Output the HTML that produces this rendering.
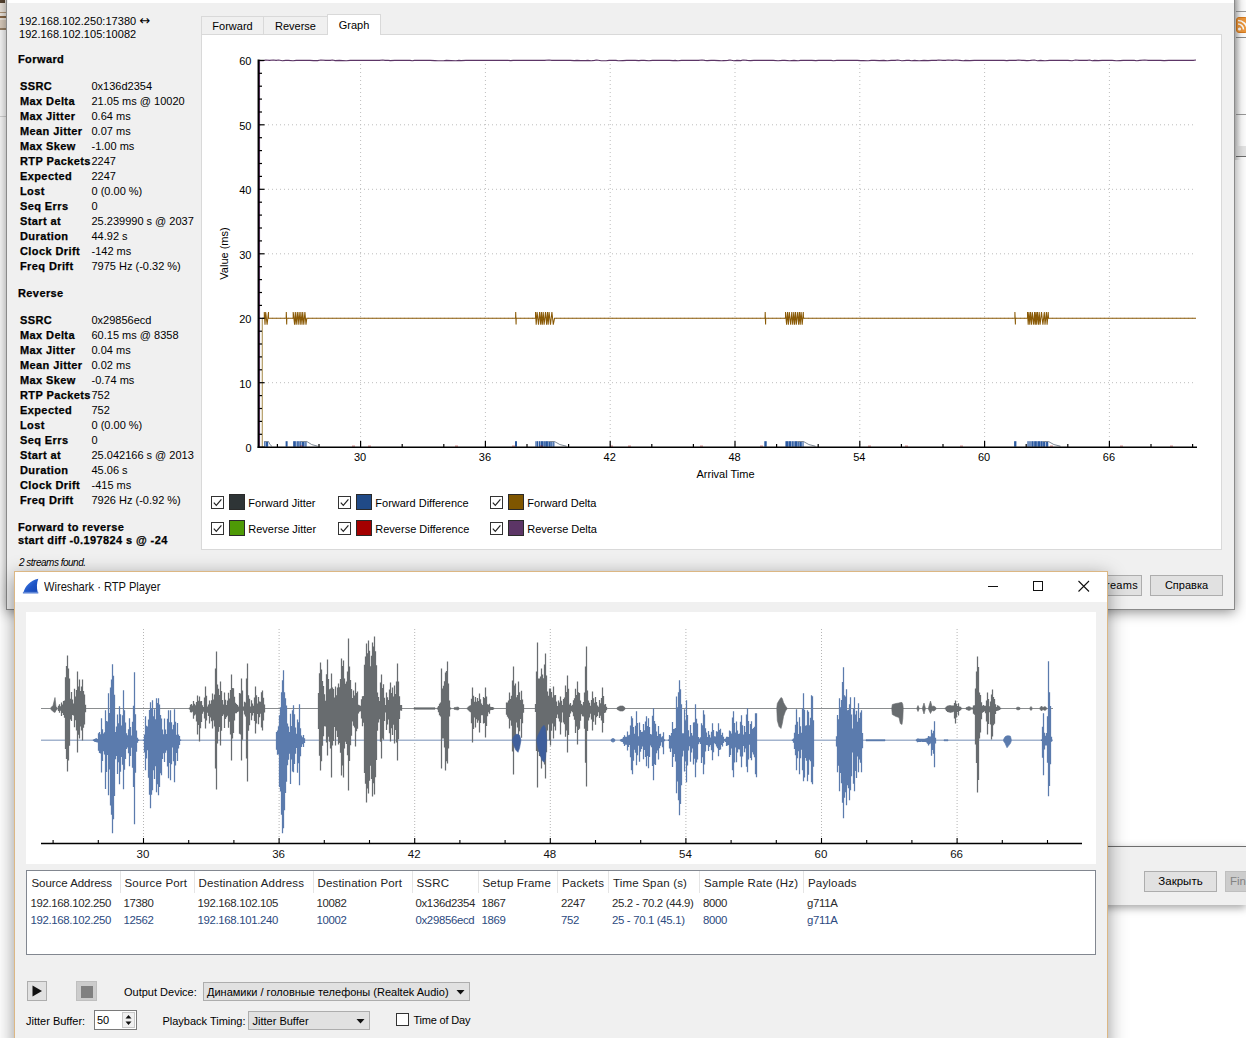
<!DOCTYPE html><html><head><meta charset="utf-8"><title>Wireshark RTP</title><style>
*{margin:0;padding:0;box-sizing:border-box}
html,body{width:1246px;height:1038px;overflow:hidden;background:#fff}
body{position:relative;font-family:"Liberation Sans",sans-serif;font-size:11px;color:#000;line-height:13px}
.a{position:absolute;white-space:nowrap}
.b{font-weight:bold;letter-spacing:.4px;-webkit-text-stroke:.25px #000}
.t{position:absolute;white-space:nowrap;height:13px;line-height:13px}
.btn{position:absolute;background:#e1e1e1;border:1px solid #adadad;text-align:center;white-space:nowrap}
.s{font-size:11.4px;color:#2b2b2b;letter-spacing:-.33px}
.s2{font-size:11.4px;color:#2c4a80;letter-spacing:-.33px}
.hd{font-size:11.5px;color:#222;letter-spacing:.18px}
</style></head><body>
<div class="a" style="left:0;top:0;width:7px;height:30px;background:#f3ece4"></div>
<div class="a" style="left:0;top:0;width:5px;height:3px;background:#5a4632"></div>
<div class="a" style="left:0;top:12px;width:7px;height:1px;background:#b59a7c"></div>
<div class="a" style="left:0;top:16px;width:7px;height:2px;background:#8b6a48"></div>
<div class="a" style="left:0;top:20px;width:7px;height:8px;background:#e0d2c2"></div>
<div class="a" style="left:0;top:28px;width:7px;height:2px;background:#9c8468"></div>
<div class="a" style="left:0;top:116px;width:7px;height:1px;background:#d8d8d8"></div>
<div class="a" style="left:1235px;top:0;width:11px;height:160px;background:linear-gradient(90deg,#d8d8d8,#fff 6px)"></div>
<div class="a" style="left:1236px;top:11px;width:10px;height:1px;background:#9a9a9a"></div>
<div class="a" style="left:1236px;top:17px;width:12px;height:16px;background:#f09a3e;border:1px solid #d97c1e;border-radius:3px;overflow:hidden"><svg width="10" height="14" viewBox="0 0 10 14" style="position:absolute;left:0;top:0"><circle cx="2.5" cy="11" r="1.6" fill="#fff"/><path d="M1,6 a5.5,5.5 0 0 1 5.5,5.5" stroke="#fff" stroke-width="1.6" fill="none"/><path d="M1,2.5 a9,9 0 0 1 9,9" stroke="#fff" stroke-width="1.6" fill="none"/></svg></div>
<div class="a" style="left:1236px;top:37px;width:10px;height:1px;background:#8c8c8c"></div>
<div class="a" style="left:1236px;top:114px;width:10px;height:1px;background:#9a9a9a"></div>
<div class="a" style="left:1236px;top:146px;width:10px;height:10px;background:#e6e6e6"></div>
<div class="a" style="left:1236px;top:156px;width:10px;height:1px;background:#6e6e6e"></div>
<div class="a" style="left:1100px;top:846px;width:146px;height:59px;background:#f0f0f0;border-top:1px solid #6e6e6e;box-shadow:0 3px 8px rgba(0,0,0,.35)"></div>
<div class="btn" style="left:1144px;top:871px;width:73px;height:21px;line-height:19px;font-size:11.5px">Закрыть</div>
<div class="btn" style="left:1225px;top:871px;width:40px;height:21px;line-height:19px;background:#ccc;border-color:#bfbfbf;color:#838383;text-align:left;padding-left:4px;font-size:11.5px">Find</div>
<div class="a" style="left:6px;top:-10px;width:1229px;height:619.5px;background:#f0f0f0;border:1px solid #8a8a8a;border-top:none;box-shadow:0 2px 12px rgba(0,0,0,.45)"></div>
<div class="a" style="left:8px;top:0;width:1226px;height:3px;background:#fff"></div>
<div class="t " style="left:19px;top:15.2px;letter-spacing:.05px">192.168.102.250:17380 <span style="font-family:DejaVu Sans;font-size:13px;line-height:10px">&#8596;</span></div>
<div class="t " style="left:19px;top:28px;letter-spacing:.05px">192.168.102.105:10082</div>
<div class="t b" style="left:18px;top:53.3px;">Forward</div>
<div class="t b" style="left:20px;top:80px;">SSRC</div>
<div class="t " style="left:91.5px;top:80px;">0x136d2354</div>
<div class="t b" style="left:20px;top:95px;">Max Delta</div>
<div class="t " style="left:91.5px;top:95px;">21.05 ms @ 10020</div>
<div class="t b" style="left:20px;top:110px;">Max Jitter</div>
<div class="t " style="left:91.5px;top:110px;">0.64 ms</div>
<div class="t b" style="left:20px;top:125px;">Mean Jitter</div>
<div class="t " style="left:91.5px;top:125px;">0.07 ms</div>
<div class="t b" style="left:20px;top:140px;">Max Skew</div>
<div class="t " style="left:91.5px;top:140px;">-1.00 ms</div>
<div class="t b" style="left:20px;top:155px;">RTP Packets</div>
<div class="t " style="left:91.5px;top:155px;">2247</div>
<div class="t b" style="left:20px;top:170px;">Expected</div>
<div class="t " style="left:91.5px;top:170px;">2247</div>
<div class="t b" style="left:20px;top:185px;">Lost</div>
<div class="t " style="left:91.5px;top:185px;">0 (0.00 %)</div>
<div class="t b" style="left:20px;top:200px;">Seq Errs</div>
<div class="t " style="left:91.5px;top:200px;">0</div>
<div class="t b" style="left:20px;top:215px;">Start at</div>
<div class="t " style="left:91.5px;top:215px;">25.239990 s @ 2037</div>
<div class="t b" style="left:20px;top:230px;">Duration</div>
<div class="t " style="left:91.5px;top:230px;">44.92 s</div>
<div class="t b" style="left:20px;top:245px;">Clock Drift</div>
<div class="t " style="left:91.5px;top:245px;">-142 ms</div>
<div class="t b" style="left:20px;top:260px;">Freq Drift</div>
<div class="t " style="left:91.5px;top:260px;">7975 Hz (-0.32 %)</div>
<div class="t b" style="left:18px;top:287px;">Reverse</div>
<div class="t b" style="left:20px;top:314px;">SSRC</div>
<div class="t " style="left:91.5px;top:314px;">0x29856ecd</div>
<div class="t b" style="left:20px;top:329px;">Max Delta</div>
<div class="t " style="left:91.5px;top:329px;">60.15 ms @ 8358</div>
<div class="t b" style="left:20px;top:344px;">Max Jitter</div>
<div class="t " style="left:91.5px;top:344px;">0.04 ms</div>
<div class="t b" style="left:20px;top:359px;">Mean Jitter</div>
<div class="t " style="left:91.5px;top:359px;">0.02 ms</div>
<div class="t b" style="left:20px;top:374px;">Max Skew</div>
<div class="t " style="left:91.5px;top:374px;">-0.74 ms</div>
<div class="t b" style="left:20px;top:389px;">RTP Packets</div>
<div class="t " style="left:91.5px;top:389px;">752</div>
<div class="t b" style="left:20px;top:404px;">Expected</div>
<div class="t " style="left:91.5px;top:404px;">752</div>
<div class="t b" style="left:20px;top:419px;">Lost</div>
<div class="t " style="left:91.5px;top:419px;">0 (0.00 %)</div>
<div class="t b" style="left:20px;top:434px;">Seq Errs</div>
<div class="t " style="left:91.5px;top:434px;">0</div>
<div class="t b" style="left:20px;top:449px;">Start at</div>
<div class="t " style="left:91.5px;top:449px;">25.042166 s @ 2013</div>
<div class="t b" style="left:20px;top:464px;">Duration</div>
<div class="t " style="left:91.5px;top:464px;">45.06 s</div>
<div class="t b" style="left:20px;top:479px;">Clock Drift</div>
<div class="t " style="left:91.5px;top:479px;">-415 ms</div>
<div class="t b" style="left:20px;top:494px;">Freq Drift</div>
<div class="t " style="left:91.5px;top:494px;">7926 Hz (-0.92 %)</div>
<div class="t b" style="left:18px;top:521px;">Forward to reverse</div>
<div class="t b" style="left:18px;top:534.2px;">start diff -0.197824 s @ -24</div>
<div class="t " style="left:19px;top:556.4px;font-size:10px;letter-spacing:-.5px"><i>2 streams found.</i></div>
<div class="a" style="left:201px;top:34px;width:1021px;height:516px;background:#fff;border:1px solid #d9d9d9"></div>
<div class="a" style="left:201px;top:16px;width:63px;height:19px;background:#f0f0f0;border:1px solid #d9d9d9;text-align:center;line-height:19px">Forward</div>
<div class="a" style="left:263px;top:16px;width:65px;height:19px;background:#f0f0f0;border:1px solid #d9d9d9;text-align:center;line-height:19px">Reverse</div>
<div class="a" style="left:327px;top:14px;width:54px;height:21px;background:#fff;border:1px solid #d9d9d9;border-bottom:none;text-align:center;line-height:21px">Graph</div>
<svg class="a" style="left:0;top:0" width="1246" height="560" viewBox="0 0 1246 560" font-family="Liberation Sans, sans-serif" font-size="11px">
<line x1="360.6" x2="360.6" y1="60" y2="447" stroke="#bdbdbd" stroke-width="1" stroke-dasharray="1,3"/>
<line x1="485.4" x2="485.4" y1="60" y2="447" stroke="#bdbdbd" stroke-width="1" stroke-dasharray="1,3"/>
<line x1="610.2" x2="610.2" y1="60" y2="447" stroke="#bdbdbd" stroke-width="1" stroke-dasharray="1,3"/>
<line x1="735.0" x2="735.0" y1="60" y2="447" stroke="#bdbdbd" stroke-width="1" stroke-dasharray="1,3"/>
<line x1="859.8" x2="859.8" y1="60" y2="447" stroke="#bdbdbd" stroke-width="1" stroke-dasharray="1,3"/>
<line x1="984.6" x2="984.6" y1="60" y2="447" stroke="#bdbdbd" stroke-width="1" stroke-dasharray="1,3"/>
<line x1="1109.4" x2="1109.4" y1="60" y2="447" stroke="#bdbdbd" stroke-width="1" stroke-dasharray="1,3"/>
<line x1="260" x2="1196" y1="382.7" y2="382.7" stroke="#bdbdbd" stroke-width="1" stroke-dasharray="1,3"/>
<line x1="260" x2="1196" y1="318.3" y2="318.3" stroke="#bdbdbd" stroke-width="1" stroke-dasharray="1,3"/>
<line x1="260" x2="1196" y1="253.8" y2="253.8" stroke="#bdbdbd" stroke-width="1" stroke-dasharray="1,3"/>
<line x1="260" x2="1196" y1="189.3" y2="189.3" stroke="#bdbdbd" stroke-width="1" stroke-dasharray="1,3"/>
<line x1="260" x2="1196" y1="124.8" y2="124.8" stroke="#bdbdbd" stroke-width="1" stroke-dasharray="1,3"/>
<path d="M259.5,447 L259.5,60.4L263.2,60.8L265.6,60.0L269.5,60.4L273.3,60.0L276.1,60.4L278.7,60.0L282.3,60.8L285.7,60.4L288.4,60.4L293.0,60.8L296.2,60.4L300.2,60.4L302.7,60.4L305.6,60.4L310.0,60.4L313.5,60.6L317.6,60.6L320.8,60.0L325.7,60.4L330.3,60.4L332.4,60.0L335.1,60.6L339.4,60.4L342.7,60.6L346.4,60.8L350.2,60.4L354.9,60.4L359.4,60.4L363.5,60.4L368.4,60.4L372.6,60.4L376.5,60.4L379.3,60.4L382.8,60.0L385.0,60.4L388.3,60.4L390.3,60.6L394.6,60.4L396.8,60.4L399.9,60.4L403.5,60.4L407.1,60.4L410.0,60.4L412.3,60.8L414.4,60.4L419.3,60.4L423.2,60.4L427.2,60.4L430.2,60.4L434.9,60.6L438.0,60.8L441.1,60.8L443.5,60.8L446.3,60.4L451.1,60.6L456.0,60.8L458.9,60.4L461.0,60.6L465.9,60.4L468.0,60.4L470.2,60.4L473.6,60.4L477.4,60.4L481.6,60.4L485.4,60.4L490.3,60.4L494.1,60.4L497.9,60.4L500.4,60.4L503.4,60.4L507.9,60.4L510.8,60.6L513.1,60.4L518.0,60.4L521.0,60.4L524.9,60.4L527.7,60.4L531.7,60.4L534.0,60.4L538.8,60.4L542.2,60.4L544.4,60.4L549.1,60.0L551.9,60.4L554.0,60.4L556.9,60.4L561.5,60.4L565.9,60.4L570.3,60.4L574.1,60.6L577.0,60.4L580.4,60.6L583.3,60.6L585.4,60.6L587.8,60.4L591.3,60.8L594.6,60.4L596.7,60.0L601.2,60.8L606.1,60.8L609.1,60.4L613.7,60.4L616.0,60.4L618.2,60.8L622.9,60.6L626.7,60.4L630.1,60.4L632.6,60.4L635.3,60.4L638.9,60.6L641.1,60.4L644.1,60.4L649.0,60.8L652.4,60.4L655.5,60.4L657.9,60.4L660.4,60.4L665.1,60.4L669.6,60.4L673.1,60.6L675.2,60.4L678.0,60.8L681.5,60.4L685.0,60.4L689.5,60.4L691.7,60.4L693.9,60.4L698.4,60.4L702.0,60.0L704.9,60.4L707.1,60.6L711.1,60.4L714.2,60.4L719.1,60.6L721.5,60.8L723.5,60.6L727.9,60.4L730.0,60.0L733.8,60.8L737.0,60.4L740.8,60.6L743.0,60.0L747.3,60.4L750.5,60.6L753.9,60.4L756.6,60.4L760.7,60.4L765.1,60.4L768.4,60.4L773.2,60.4L778.1,60.8L782.4,60.4L784.8,60.4L789.6,60.8L794.0,60.4L798.2,60.8L800.5,60.4L803.9,60.4L808.3,60.4L811.8,60.4L815.8,60.6L818.4,60.4L821.4,60.4L823.5,60.4L827.5,60.4L831.2,60.4L833.3,60.8L836.9,60.4L839.2,60.4L844.0,60.4L847.7,60.4L852.2,60.4L857.2,60.4L860.5,60.6L863.3,60.6L868.1,60.8L871.4,60.4L874.5,60.4L879.4,60.6L883.9,60.4L887.2,60.8L891.2,60.4L895.2,60.4L897.7,60.0L901.9,60.8L906.7,60.4L909.2,60.4L911.6,60.8L914.5,60.4L919.1,60.8L924.0,60.4L928.0,60.6L931.8,60.4L936.4,60.4L938.5,60.0L942.9,60.4L945.4,60.4L948.1,60.0L952.5,60.4L955.7,60.0L959.8,60.4L963.2,60.8L965.3,60.4L969.9,60.6L974.2,60.4L977.6,60.4L982.3,60.4L987.2,60.4L989.9,60.4L994.2,60.4L996.8,60.4L1001.5,60.4L1004.0,60.4L1006.9,60.6L1009.2,60.4L1011.6,60.4L1016.1,60.4L1018.2,60.0L1021.9,60.4L1023.9,60.4L1026.9,60.6L1030.4,60.4L1034.3,60.0L1037.5,60.8L1040.5,60.4L1042.7,60.6L1045.0,60.8L1049.7,60.4L1053.3,60.4L1057.4,60.4L1061.6,60.4L1065.6,60.4L1067.9,60.4L1072.0,60.8L1075.5,60.0L1079.1,60.4L1083.2,60.4L1087.2,60.4L1089.7,60.0L1092.1,60.8L1094.5,60.4L1098.4,60.6L1102.1,60.4L1105.5,60.4L1109.8,60.4L1112.1,60.4L1116.4,60.8L1120.1,60.6L1123.2,60.4L1126.0,60.4L1130.6,60.4L1134.1,60.4L1136.8,60.8L1139.9,60.4L1144.7,60.0L1148.3,60.4L1151.4,60.4L1153.8,60.4L1157.9,60.4L1160.4,60.4L1164.1,60.6L1168.6,60.4L1172.4,60.4L1176.9,60.4L1180.6,60.4L1184.3,60.4L1188.9,60.4L1193.2,60.4L1196.0,60.0" fill="none" stroke="#5c3566" stroke-width="1.1"/>
<line x1="262.3" x2="262.3" y1="447" y2="318.3" stroke="#b39b63" stroke-width="1.2"/>
<path d="M262.3,318.3L264.3,318.3L264.3,312.0L265.0,324.6L265.7,312.0L267.1,324.6L268.5,312.0L268.5,318.3L285.8,318.3L286.2,318.3L286.3,312.0L286.7,324.6L286.8,318.3L287.2,318.3L293.2,318.3L293.2,312.0L294.6,324.6L295.3,312.0L296.2,324.6L297.3,312.0L298.2,324.6L299.1,312.0L300.2,324.6L300.9,312.0L302.0,324.6L302.7,312.0L303.8,324.6L304.9,312.0L306.0,324.6L306.8,318.3L515.2,318.3L515.6,318.3L515.7,312.0L516.1,324.6L516.2,318.3L516.6,318.3L535.5,318.3L535.5,312.0L536.2,324.6L537.1,312.0L538.5,324.6L539.6,312.0L540.7,324.6L541.4,312.0L542.3,324.6L543.2,312.0L544.1,324.6L545.5,312.0L546.6,324.6L547.5,312.0L548.2,324.6L549.1,312.0L550.5,324.6L551.9,312.0L553.3,324.6L554.5,318.3L764.5,318.3L765.1,318.3L765.2,312.0L765.6,324.6L765.7,318.3L766.3,318.3L785.5,318.3L785.5,312.0L786.6,324.6L787.5,312.0L788.4,324.6L789.3,312.0L790.7,324.6L791.8,312.0L792.7,324.6L793.8,312.0L794.5,324.6L795.6,312.0L796.3,324.6L797.7,312.0L798.6,324.6L799.5,312.0L800.2,324.6L801.1,312.0L802.2,324.6L803.3,312.0L803.5,318.3L1014.3,318.3L1014.9,318.3L1014.9,312.0L1015.4,324.6L1015.4,318.3L1016.0,318.3L1027.5,318.3L1027.5,312.0L1028.2,324.6L1028.9,312.0L1029.8,324.6L1030.5,312.0L1031.6,324.6L1032.3,312.0L1033.7,324.6L1034.6,312.0L1035.3,324.6L1036.0,312.0L1036.7,324.6L1037.4,312.0L1038.5,324.6L1039.2,312.0L1040.1,324.6L1041.5,312.0L1042.9,324.6L1044.3,312.0L1045.0,324.6L1046.4,312.0L1047.1,324.6L1048.2,312.0L1048.5,318.3L1196,318.3" fill="none" stroke="#8a5a06" stroke-width="1.05" stroke-linejoin="miter"/>
<path d="M264.3,441.2h1.0v5.5h-1.0zM266.0,441.2h2.0v5.5h-2.0z" fill="#2b5aa0"/>
<rect x="264.3" y="441.2" width="4.2" height="5.5" fill="#2b5aa0" opacity=".35"/>
<path d="M264.3,441.5 L268.5,441.5 Q269.8,445.3 271.9,446.2" fill="none" stroke="#7f8a96" stroke-width="1"/>
<rect x="285.6" y="441.2" width="2.0" height="5.5" fill="#2b5aa0"/>
<path d="M293.2,441.2h2.6v5.5h-2.6zM296.8,441.2h1.0v5.5h-1.0zM298.3,441.2h1.0v5.5h-1.0zM299.8,441.2h1.0v5.5h-1.0zM301.8,441.2h2.6v5.5h-2.6zM305.4,441.2h1.0v5.5h-1.0z" fill="#2b5aa0"/>
<rect x="293.2" y="441.2" width="13.6" height="5.5" fill="#2b5aa0" opacity=".35"/>
<path d="M300.8,441.5 L306.8,441.5 Q311.2,445.3 317.7,446.2" fill="none" stroke="#7f8a96" stroke-width="1"/>
<rect x="515.0" y="441.2" width="2.0" height="5.5" fill="#2b5aa0"/>
<path d="M535.5,441.2h1.0v5.5h-1.0zM537.0,441.2h1.0v5.5h-1.0zM539.0,441.2h1.0v5.5h-1.0zM540.7,441.2h2.6v5.5h-2.6zM543.8,441.2h1.0v5.5h-1.0zM545.3,441.2h2.6v5.5h-2.6zM548.6,441.2h2.0v5.5h-2.0zM551.3,441.2h1.0v5.5h-1.0zM553.3,441.2h1.0v5.5h-1.0z" fill="#2b5aa0"/>
<rect x="535.5" y="441.2" width="19.0" height="5.5" fill="#2b5aa0" opacity=".35"/>
<path d="M548.5,441.5 L554.5,441.5 Q559.3,445.3 566.5,446.2" fill="none" stroke="#7f8a96" stroke-width="1"/>
<rect x="764.3" y="441.2" width="2.4" height="5.5" fill="#2b5aa0"/>
<path d="M785.5,441.2h2.6v5.5h-2.6zM788.6,441.2h2.6v5.5h-2.6zM791.9,441.2h1.0v5.5h-1.0zM793.4,441.2h1.0v5.5h-1.0zM794.9,441.2h2.6v5.5h-2.6zM798.2,441.2h1.0v5.5h-1.0zM799.7,441.2h2.0v5.5h-2.0zM802.7,441.2h0.8v5.5h-0.8z" fill="#2b5aa0"/>
<rect x="785.5" y="441.2" width="18.0" height="5.5" fill="#2b5aa0" opacity=".35"/>
<path d="M797.5,441.5 L803.5,441.5 Q808.3,445.3 815.5,446.2" fill="none" stroke="#7f8a96" stroke-width="1"/>
<rect x="1014.1" y="441.2" width="2.3" height="5.5" fill="#2b5aa0"/>
<path d="M1027.5,441.2h1.0v5.5h-1.0zM1029.5,441.2h1.0v5.5h-1.0zM1031.5,441.2h2.0v5.5h-2.0zM1034.2,441.2h2.6v5.5h-2.6zM1037.5,441.2h2.6v5.5h-2.6zM1040.6,441.2h2.0v5.5h-2.0zM1043.1,441.2h2.0v5.5h-2.0zM1046.1,441.2h2.0v5.5h-2.0z" fill="#2b5aa0"/>
<rect x="1027.5" y="441.2" width="21.0" height="5.5" fill="#2b5aa0" opacity=".35"/>
<path d="M1042.5,441.5 L1048.5,441.5 Q1053.3,445.3 1060.5,446.2" fill="none" stroke="#7f8a96" stroke-width="1"/>
<rect x="300" y="445.6" width="3" height="1" fill="#a40000" opacity=".55"/>
<rect x="352" y="445.6" width="3" height="1" fill="#a40000" opacity=".55"/>
<rect x="368" y="445.6" width="3" height="1" fill="#a40000" opacity=".55"/>
<rect x="455" y="445.6" width="3" height="1" fill="#a40000" opacity=".55"/>
<rect x="512" y="445.6" width="3" height="1" fill="#a40000" opacity=".55"/>
<rect x="540" y="445.6" width="3" height="1" fill="#a40000" opacity=".55"/>
<rect x="610" y="445.6" width="3" height="1" fill="#a40000" opacity=".55"/>
<rect x="628" y="445.6" width="3" height="1" fill="#a40000" opacity=".55"/>
<rect x="700" y="445.6" width="3" height="1" fill="#a40000" opacity=".55"/>
<rect x="760" y="445.6" width="3" height="1" fill="#a40000" opacity=".55"/>
<rect x="868" y="445.6" width="3" height="1" fill="#a40000" opacity=".55"/>
<rect x="905" y="445.6" width="3" height="1" fill="#a40000" opacity=".55"/>
<rect x="960" y="445.6" width="3" height="1" fill="#a40000" opacity=".55"/>
<rect x="1050" y="445.6" width="3" height="1" fill="#a40000" opacity=".55"/>
<rect x="1120" y="445.6" width="3" height="1" fill="#a40000" opacity=".55"/>
<rect x="1170" y="445.6" width="3" height="1" fill="#a40000" opacity=".55"/>
<line x1="258.4" x2="258.4" y1="59.5" y2="447.8" stroke="#000" stroke-width="1.7"/>
<line x1="257.5" x2="1197" y1="447.2" y2="447.2" stroke="#000" stroke-width="1.4"/>
<line x1="259" x2="264.5" y1="447.2" y2="447.2" stroke="#000" stroke-width="1.2"/>
<line x1="259" x2="262.0" y1="434.3" y2="434.3" stroke="#000" stroke-width="1.2"/>
<line x1="259" x2="262.0" y1="421.4" y2="421.4" stroke="#000" stroke-width="1.2"/>
<line x1="259" x2="262.0" y1="408.5" y2="408.5" stroke="#000" stroke-width="1.2"/>
<line x1="259" x2="262.0" y1="395.6" y2="395.6" stroke="#000" stroke-width="1.2"/>
<line x1="259" x2="264.5" y1="382.7" y2="382.7" stroke="#000" stroke-width="1.2"/>
<line x1="259" x2="262.0" y1="369.8" y2="369.8" stroke="#000" stroke-width="1.2"/>
<line x1="259" x2="262.0" y1="356.9" y2="356.9" stroke="#000" stroke-width="1.2"/>
<line x1="259" x2="262.0" y1="344.0" y2="344.0" stroke="#000" stroke-width="1.2"/>
<line x1="259" x2="262.0" y1="331.2" y2="331.2" stroke="#000" stroke-width="1.2"/>
<line x1="259" x2="264.5" y1="318.3" y2="318.3" stroke="#000" stroke-width="1.2"/>
<line x1="259" x2="262.0" y1="305.4" y2="305.4" stroke="#000" stroke-width="1.2"/>
<line x1="259" x2="262.0" y1="292.5" y2="292.5" stroke="#000" stroke-width="1.2"/>
<line x1="259" x2="262.0" y1="279.6" y2="279.6" stroke="#000" stroke-width="1.2"/>
<line x1="259" x2="262.0" y1="266.7" y2="266.7" stroke="#000" stroke-width="1.2"/>
<line x1="259" x2="264.5" y1="253.8" y2="253.8" stroke="#000" stroke-width="1.2"/>
<line x1="259" x2="262.0" y1="240.9" y2="240.9" stroke="#000" stroke-width="1.2"/>
<line x1="259" x2="262.0" y1="228.0" y2="228.0" stroke="#000" stroke-width="1.2"/>
<line x1="259" x2="262.0" y1="215.1" y2="215.1" stroke="#000" stroke-width="1.2"/>
<line x1="259" x2="262.0" y1="202.2" y2="202.2" stroke="#000" stroke-width="1.2"/>
<line x1="259" x2="264.5" y1="189.3" y2="189.3" stroke="#000" stroke-width="1.2"/>
<line x1="259" x2="262.0" y1="176.4" y2="176.4" stroke="#000" stroke-width="1.2"/>
<line x1="259" x2="262.0" y1="163.5" y2="163.5" stroke="#000" stroke-width="1.2"/>
<line x1="259" x2="262.0" y1="150.6" y2="150.6" stroke="#000" stroke-width="1.2"/>
<line x1="259" x2="262.0" y1="137.7" y2="137.7" stroke="#000" stroke-width="1.2"/>
<line x1="259" x2="264.5" y1="124.8" y2="124.8" stroke="#000" stroke-width="1.2"/>
<line x1="259" x2="262.0" y1="112.0" y2="112.0" stroke="#000" stroke-width="1.2"/>
<line x1="259" x2="262.0" y1="99.1" y2="99.1" stroke="#000" stroke-width="1.2"/>
<line x1="259" x2="262.0" y1="86.2" y2="86.2" stroke="#000" stroke-width="1.2"/>
<line x1="259" x2="262.0" y1="73.3" y2="73.3" stroke="#000" stroke-width="1.2"/>
<line x1="259" x2="264.5" y1="60.4" y2="60.4" stroke="#000" stroke-width="1.2"/>
<line x1="277.4" x2="277.4" y1="444.0" y2="447" stroke="#000" stroke-width="1.2"/>
<line x1="319.0" x2="319.0" y1="444.0" y2="447" stroke="#000" stroke-width="1.2"/>
<line x1="360.6" x2="360.6" y1="441.0" y2="447" stroke="#000" stroke-width="1.2"/>
<line x1="402.2" x2="402.2" y1="444.0" y2="447" stroke="#000" stroke-width="1.2"/>
<line x1="443.8" x2="443.8" y1="444.0" y2="447" stroke="#000" stroke-width="1.2"/>
<line x1="485.4" x2="485.4" y1="441.0" y2="447" stroke="#000" stroke-width="1.2"/>
<line x1="527.0" x2="527.0" y1="444.0" y2="447" stroke="#000" stroke-width="1.2"/>
<line x1="568.6" x2="568.6" y1="444.0" y2="447" stroke="#000" stroke-width="1.2"/>
<line x1="610.2" x2="610.2" y1="441.0" y2="447" stroke="#000" stroke-width="1.2"/>
<line x1="651.8" x2="651.8" y1="444.0" y2="447" stroke="#000" stroke-width="1.2"/>
<line x1="693.4" x2="693.4" y1="444.0" y2="447" stroke="#000" stroke-width="1.2"/>
<line x1="735.0" x2="735.0" y1="441.0" y2="447" stroke="#000" stroke-width="1.2"/>
<line x1="776.6" x2="776.6" y1="444.0" y2="447" stroke="#000" stroke-width="1.2"/>
<line x1="818.2" x2="818.2" y1="444.0" y2="447" stroke="#000" stroke-width="1.2"/>
<line x1="859.8" x2="859.8" y1="441.0" y2="447" stroke="#000" stroke-width="1.2"/>
<line x1="901.4" x2="901.4" y1="444.0" y2="447" stroke="#000" stroke-width="1.2"/>
<line x1="943.0" x2="943.0" y1="444.0" y2="447" stroke="#000" stroke-width="1.2"/>
<line x1="984.6" x2="984.6" y1="441.0" y2="447" stroke="#000" stroke-width="1.2"/>
<line x1="1026.2" x2="1026.2" y1="444.0" y2="447" stroke="#000" stroke-width="1.2"/>
<line x1="1067.8" x2="1067.8" y1="444.0" y2="447" stroke="#000" stroke-width="1.2"/>
<line x1="1109.4" x2="1109.4" y1="441.0" y2="447" stroke="#000" stroke-width="1.2"/>
<line x1="1151.0" x2="1151.0" y1="444.0" y2="447" stroke="#000" stroke-width="1.2"/>
<line x1="1192.6" x2="1192.6" y1="444.0" y2="447" stroke="#000" stroke-width="1.2"/>
<text x="251.5" y="452.0" text-anchor="end">0</text>
<text x="251.5" y="387.5" text-anchor="end">10</text>
<text x="251.5" y="323.1" text-anchor="end">20</text>
<text x="251.5" y="258.6" text-anchor="end">30</text>
<text x="251.5" y="194.1" text-anchor="end">40</text>
<text x="251.5" y="129.6" text-anchor="end">50</text>
<text x="251.5" y="65.2" text-anchor="end">60</text>
<text x="360.1" y="460.9" text-anchor="middle">30</text>
<text x="484.9" y="460.9" text-anchor="middle">36</text>
<text x="609.7" y="460.9" text-anchor="middle">42</text>
<text x="734.5" y="460.9" text-anchor="middle">48</text>
<text x="859.3" y="460.9" text-anchor="middle">54</text>
<text x="984.1" y="460.9" text-anchor="middle">60</text>
<text x="1108.9" y="460.9" text-anchor="middle">66</text>
<text x="725.5" y="477.6" text-anchor="middle">Arrival Time</text>
<text transform="translate(228,253.5) rotate(-90)" text-anchor="middle">Value (ms)</text>
</svg>
<div class="a" style="left:211px;top:496px;width:13px;height:13px;background:#fff;border:1px solid #333"><svg width="11" height="11" viewBox="0 0 11 11" style="position:absolute;left:0;top:0"><path d="M1.8,5.6 L4.3,8.3 L9.4,2.4" fill="none" stroke="#222" stroke-width="1.2"/></svg></div>
<div class="a" style="left:229px;top:494px;width:16px;height:16px;background:#2e3436;border:1px solid #2a2a2a"></div>
<div class="t " style="left:248.3px;top:496.6px;">Forward Jitter</div>
<div class="a" style="left:338px;top:496px;width:13px;height:13px;background:#fff;border:1px solid #333"><svg width="11" height="11" viewBox="0 0 11 11" style="position:absolute;left:0;top:0"><path d="M1.8,5.6 L4.3,8.3 L9.4,2.4" fill="none" stroke="#222" stroke-width="1.2"/></svg></div>
<div class="a" style="left:356px;top:494px;width:16px;height:16px;background:#204a87;border:1px solid #2a2a2a"></div>
<div class="t " style="left:375.3px;top:496.6px;">Forward Difference</div>
<div class="a" style="left:490px;top:496px;width:13px;height:13px;background:#fff;border:1px solid #333"><svg width="11" height="11" viewBox="0 0 11 11" style="position:absolute;left:0;top:0"><path d="M1.8,5.6 L4.3,8.3 L9.4,2.4" fill="none" stroke="#222" stroke-width="1.2"/></svg></div>
<div class="a" style="left:508px;top:494px;width:16px;height:16px;background:#7f5600;border:1px solid #2a2a2a"></div>
<div class="t " style="left:527.3px;top:496.6px;">Forward Delta</div>
<div class="a" style="left:211px;top:522px;width:13px;height:13px;background:#fff;border:1px solid #333"><svg width="11" height="11" viewBox="0 0 11 11" style="position:absolute;left:0;top:0"><path d="M1.8,5.6 L4.3,8.3 L9.4,2.4" fill="none" stroke="#222" stroke-width="1.2"/></svg></div>
<div class="a" style="left:229px;top:520px;width:16px;height:16px;background:#4e9a06;border:1px solid #2a2a2a"></div>
<div class="t " style="left:248.3px;top:522.6px;">Reverse Jitter</div>
<div class="a" style="left:338px;top:522px;width:13px;height:13px;background:#fff;border:1px solid #333"><svg width="11" height="11" viewBox="0 0 11 11" style="position:absolute;left:0;top:0"><path d="M1.8,5.6 L4.3,8.3 L9.4,2.4" fill="none" stroke="#222" stroke-width="1.2"/></svg></div>
<div class="a" style="left:356px;top:520px;width:16px;height:16px;background:#a40000;border:1px solid #2a2a2a"></div>
<div class="t " style="left:375.3px;top:522.6px;">Reverse Difference</div>
<div class="a" style="left:490px;top:522px;width:13px;height:13px;background:#fff;border:1px solid #333"><svg width="11" height="11" viewBox="0 0 11 11" style="position:absolute;left:0;top:0"><path d="M1.8,5.6 L4.3,8.3 L9.4,2.4" fill="none" stroke="#222" stroke-width="1.2"/></svg></div>
<div class="a" style="left:508px;top:520px;width:16px;height:16px;background:#5c3566;border:1px solid #2a2a2a"></div>
<div class="t " style="left:527.3px;top:522.6px;">Reverse Delta</div>
<div class="btn" style="left:1068px;top:575px;width:74px;height:21px;line-height:19px;text-align:right;padding-right:3px;overflow:hidden;direction:rtl"><span style="direction:ltr;unicode-bidi:bidi-override;letter-spacing:.3px">Analyze Streams</span></div>
<div class="btn" style="left:1150px;top:575px;width:73px;height:21px;line-height:19px">Справка</div>
<div class="a" style="left:14px;top:571px;width:1094px;height:480px;background:#f0f0f0;border:1px solid #dcb784;box-shadow:0 5px 18px rgba(0,0,0,.42)"></div>
<div class="a" style="left:15px;top:572px;width:1092px;height:30px;background:#fff"></div>
<svg class="a" style="left:22px;top:577px" width="20" height="18" viewBox="0 0 20 18"><defs><linearGradient id="fin" x1="0" y1="0" x2="1" y2="1"><stop offset="0" stop-color="#4f8cf0"/><stop offset=".55" stop-color="#1f55c6"/><stop offset="1" stop-color="#1646b4"/></linearGradient></defs><path d="M1.6,15.2 C3.2,9 8,3.6 16.3,1.7 C14.7,6 14.5,10.5 15.7,15.2 Z" fill="url(#fin)"/><path d="M0.9,15.7 H16.3" stroke="#5f86d6" stroke-width="1.7"/></svg>
<div class="a" style="left:44px;top:580px;font-size:12.4px;line-height:15px;color:#111;transform:scaleX(.898);transform-origin:0 0">Wireshark · RTP Player</div>
<svg class="a" style="left:980px;top:576px" width="120" height="20" viewBox="0 0 120 20"><path d="M8,10.5 H18" stroke="#111" stroke-width="1"/><rect x="53.5" y="5.5" width="9" height="9" fill="none" stroke="#111" stroke-width="1"/><path d="M98.5,5 L109,15.5 M109,5 L98.5,15.5" stroke="#111" stroke-width="1.1"/></svg>
<div class="a" style="left:26px;top:612px;width:1070px;height:252px;background:#fff"></div>
<svg class="a" style="left:0;top:600px" width="1110" height="270" viewBox="0 600 1110 270" font-family="Liberation Sans, sans-serif" font-size="11.5px">
<line x1="143.5" x2="143.5" y1="629" y2="843" stroke="#b5b5b5" stroke-width="1" stroke-dasharray="1,2"/>
<line x1="279.1" x2="279.1" y1="629" y2="843" stroke="#b5b5b5" stroke-width="1" stroke-dasharray="1,2"/>
<line x1="414.7" x2="414.7" y1="629" y2="843" stroke="#b5b5b5" stroke-width="1" stroke-dasharray="1,2"/>
<line x1="550.3" x2="550.3" y1="629" y2="843" stroke="#b5b5b5" stroke-width="1" stroke-dasharray="1,2"/>
<line x1="685.9" x2="685.9" y1="629" y2="843" stroke="#b5b5b5" stroke-width="1" stroke-dasharray="1,2"/>
<line x1="821.5" x2="821.5" y1="629" y2="843" stroke="#b5b5b5" stroke-width="1" stroke-dasharray="1,2"/>
<line x1="957.1" x2="957.1" y1="629" y2="843" stroke="#b5b5b5" stroke-width="1" stroke-dasharray="1,2"/>
<line x1="41" x2="1053" y1="708.5" y2="708.5" stroke="#8a8d8f" stroke-width="1.2"/>
<line x1="41" x2="1053" y1="740.3" y2="740.3" stroke="#a3b4ce" stroke-width="1.4"/>
<path d="M51.0,708.5L51.0,707.5L53.0,705.5L55.0,697.5L56.0,706.5L57.0,707.5L57.0,709.5L56.0,710.5L55.0,712.5L53.0,711.5L51.0,709.5Z M414.0,708.5L414.0,707.7L435.0,707.7L435.0,709.3L414.0,709.3Z M454.0,708.5L454.0,707.7L458.0,707.0L459.0,707.7L459.0,709.3L458.0,710.0L454.0,709.3Z M617.0,708.5L617.0,707.7L620.0,706.0L623.0,706.0L625.0,707.7L625.0,709.3L623.0,711.0L620.0,711.0L617.0,709.3Z M776.8,708.5L776.8,707.7L777.3,703.5L779.0,700.5L781.0,697.5L782.3,698.5L783.5,702.5L785.5,706.0L787.0,708.0L787.0,709.0L785.5,711.0L783.5,716.5L782.3,723.5L781.0,728.5L779.0,726.5L777.3,720.5L776.8,709.3Z M891.8,708.5L891.8,707.7L892.3,704.5L896.0,703.5L899.0,703.0L900.3,702.5L902.0,702.5L902.8,704.5L903.2,707.7L903.2,709.3L902.8,718.5L902.0,724.5L900.3,723.5L899.0,717.5L896.0,716.5L892.3,714.5L891.8,709.3Z M917.0,708.5L917.0,707.7L918.0,705.5L919.0,707.7L919.0,709.3L918.0,711.5L917.0,709.3Z M922.5,708.5L922.5,707.7L924.0,703.0L925.3,707.7L925.3,709.3L924.0,714.0L922.5,709.3Z M928.5,708.5L928.5,707.7L930.5,701.0L932.0,706.5L934.0,706.0L936.0,707.7L936.0,709.3L934.0,711.0L932.0,710.5L930.5,713.5L928.5,709.3Z M966.0,708.5L966.0,707.7L969.0,706.5L971.5,707.7L971.5,709.3L969.0,710.5L966.0,709.3Z M1016.5,708.5L1016.5,707.7L1018.0,707.0L1020.0,707.7L1020.0,709.3L1018.0,710.0L1016.5,709.3Z M1030.0,708.5L1030.0,707.7L1031.0,706.5L1032.0,707.7L1032.0,709.3L1031.0,710.5L1030.0,709.3Z M1040.0,708.5L1040.0,707.7L1041.5,706.0L1043.0,707.5L1045.0,706.5L1046.5,707.7L1046.5,709.3L1045.0,710.5L1043.0,709.5L1041.5,711.0L1040.0,709.3Z" fill="#686c6f" stroke="#686c6f" stroke-width="0.6"/>
<path d="M58.5,705.7V711.0M59.5,704.2V712.8M60.5,706.3V710.8M61.5,702.6V715.9M62.5,704.6V713.1M63.5,701.0V715.0M64.5,700.6V717.7M65.5,677.2V748.9M66.5,666.1V758.9M67.5,655.5V771.5M68.5,668.5V760.5M69.5,678.5V745.8M70.5,698.8V719.6M71.5,692.1V721.0M72.5,699.5V714.9M73.5,703.4V715.5M74.5,688.7V727.3M75.5,696.4V720.2M76.5,690.0V730.5M77.5,671.5V752.5M78.5,686.4V734.7M79.5,679.5V738.5M80.5,691.1V726.5M81.5,686.5V730.4M82.5,679.5V740.5M83.5,691.1V727.7M84.5,694.4V724.4M85.5,704.8V712.2 M189.5,707.6V709.4M190.5,704.8V712.2M191.5,704.1V712.5M192.5,705.4V711.8M193.5,701.1V718.8M194.5,703.8V715.6M195.5,705.3V714.4M196.5,702.0V721.5M197.5,695.5V734.5M198.5,700.7V725.0M199.5,696.5V741.5M200.5,701.3V728.3M201.5,701.1V722.0M202.5,705.2V713.7M203.5,707.0V711.8M204.5,697.5V718.5M205.5,686.5V728.5M206.5,695.8V720.5M207.5,706.4V712.7M208.5,704.5V716.0M209.5,700.5V723.5M210.5,703.7V717.5M211.5,700.3V721.3M212.5,693.5V728.5M213.5,699.5V720.5M214.5,694.5V726.5M215.5,668.5V768.5M216.5,651.5V789.5M217.5,684.5V743.5M218.5,688.8V731.8M219.5,695.0V727.0M220.5,681.5V745.5M221.5,690.9V730.7M222.5,699.9V715.9M223.5,704.4V714.4M224.5,692.4V728.0M225.5,699.7V718.9M226.5,705.0V717.2M227.5,700.5V715.8M228.5,692.7V727.8M229.5,698.4V721.7M230.5,690.0V734.5M231.5,674.5V760.5M232.5,688.1V738.5M233.5,688.3V733.0M234.5,696.7V720.6M235.5,702.7V713.3M236.5,704.0V713.3M237.5,705.1V711.9M238.5,706.6V711.5M239.5,692.9V733.7M240.5,693.5V734.5M241.5,678.5V760.5M242.5,690.5V739.7M243.5,706.6V710.8M244.5,701.8V714.5M245.5,702.5V716.5M246.5,678.5V758.5M247.5,663.5V781.5M248.5,695.2V730.8M249.5,698.8V725.2M250.5,706.5V713.0M251.5,700.3V720.2M252.5,703.6V715.5M253.5,705.8V712.9M254.5,697.5V721.0M255.5,686.5V733.5M256.5,695.3V723.5M257.5,703.5V713.9M258.5,696.9V724.2M259.5,701.6V717.2M260.5,701.8V713.8M261.5,692.3V727.6M262.5,690.5V730.5M263.5,697.7V720.5M264.5,704.5V712.5 M318.5,693.0V729.0M319.5,673.2V755.8M320.5,662.5V770.5M321.5,669.4V761.2M322.5,680.9V745.7M323.5,686.1V736.3M324.5,694.3V726.2M325.5,700.8V726.5M326.5,674.3V742.5M327.5,659.5V755.5M328.5,679.1V736.7M329.5,689.2V741.8M330.5,688.5V748.5M331.5,673.5V777.5M332.5,687.4V745.6M333.5,689.1V740.9M334.5,697.5V727.0M335.5,686.5V745.5M336.5,695.3V730.7M337.5,687.5V737.1M338.5,683.5V744.5M339.5,687.2V743.0M340.5,679.1V752.8M341.5,658.5V775.5M342.5,666.0V765.5M343.5,660.5V777.5M344.5,678.5V748.5M345.5,683.8V741.8M346.5,681.5V744.1M347.5,671.5V755.2M348.5,638.5V790.5M349.5,666.5V761.1M350.5,680.1V745.3M351.5,689.1V735.8M352.5,697.9V721.4M353.5,690.6V725.8M354.5,695.5V727.5M355.5,682.5V746.5M356.5,692.9V731.3M357.5,691.4V728.8M358.5,704.7V713.6M359.5,705.3V711.7M360.5,705.7V711.3M361.5,699.2V718.5M362.5,696.2V726.3M363.5,696.1V722.8M364.5,664.7V773.0M365.5,656.5V783.7M366.5,643.5V802.5M367.5,653.2V788.4M368.5,640.5V793.5M369.5,650.7V780.8M370.5,666.3V765.7M371.5,655.7V778.9M372.5,642.5V796.5M373.5,646.4V783.3M374.5,636.5V794.5M375.5,651.2V777.2M376.5,665.3V760.1M377.5,692.5V730.8M378.5,697.0V722.6M379.5,700.9V719.3M380.5,682.5V741.8M381.5,674.5V758.5M382.5,688.1V738.5M383.5,684.2V739.8M384.5,697.7V721.1M385.5,705.1V712.5M386.5,692.4V730.1M387.5,697.2V724.5M388.5,700.1V719.6M389.5,689.5V733.2M390.5,682.5V741.5M391.5,692.9V728.3M392.5,687.5V734.9M393.5,696.5V724.7M394.5,685.5V743.6M395.5,694.0V730.1M396.5,681.6V742.4M397.5,663.5V760.5M398.5,681.5V739.2M399.5,696.2V718.9M400.5,704.9V710.5M401.5,705.1V710.8 M437.5,707.6V709.4M438.5,706.0V712.2M439.5,703.8V715.2M440.5,702.5V716.5M441.5,668.5V768.5M442.5,688.5V738.5M443.5,685.8V738.5M444.5,681.2V747.4M445.5,672.5V770.5M446.5,670.9V761.2M447.5,661.5V763.5M448.5,683.5V748.5M449.5,700.5V716.5M450.5,707.6V709.4 M467.5,707.6V709.4M468.5,706.5V710.5M469.5,705.7V711.5M470.5,705.3V712.3M471.5,698.8V723.2M472.5,687.5V742.5M473.5,695.7V729.0M474.5,701.7V717.4M475.5,696.9V727.4M476.5,701.7V719.3M477.5,698.1V722.7M478.5,701.0V720.5M479.5,693.5V732.5M480.5,699.3V722.9M481.5,703.6V715.2M482.5,705.1V715.2M483.5,697.1V723.4M484.5,698.0V723.0M485.5,687.5V737.5M486.5,696.5V725.9M487.5,704.2V716.2M488.5,704.8V712.3M489.5,703.8V713.8M490.5,706.8V710.2M491.5,707.0V710.0M492.5,707.1V710.0M493.5,707.6V709.4 M506.5,702.6V714.8M507.5,702.6V716.7M508.5,700.5V718.5M509.5,692.5V728.5M510.5,698.9V720.5M511.5,695.8V725.8M512.5,680.5V751.5M513.5,666.5V774.5M514.5,685.5V738.5M515.5,683.5V738.5M516.5,697.2V722.4M517.5,695.0V727.5M518.5,681.5V746.5M519.5,692.3V731.3M520.5,700.1V719.1M521.5,690.8V737.8M522.5,699.6V723.3M523.5,704.2V712.8 M535.5,704.0V712.0M536.5,671.5V751.0M537.5,642.5V787.5M538.5,678.5V751.8M539.5,678.5V755.9M540.5,676.5V756.5M541.5,668.5V768.5M542.5,674.5V759.5M543.5,678.2V747.0M544.5,664.5V764.5M545.5,653.5V778.5M546.5,675.4V752.3M547.5,691.4V730.5M548.5,695.8V724.5M549.5,688.5V740.5M550.5,688.5V745.5M551.5,692.0V730.7M552.5,697.5V723.5M553.5,686.5V738.5M554.5,695.3V726.5M555.5,695.1V730.4M556.5,701.6V718.1M557.5,705.9V714.4M558.5,700.5V718.6M559.5,702.5V721.5M560.5,696.5V734.5M561.5,700.7V722.5M562.5,705.0V712.6M563.5,698.9V722.4M564.5,697.5V724.3M565.5,685.6V736.8M566.5,692.0V730.5M567.5,675.5V752.5M568.5,688.7V734.9M569.5,704.6V716.9M570.5,702.9V713.6M571.5,705.7V711.2M572.5,704.8V712.2M573.5,700.2V716.3M574.5,698.3V719.7M575.5,688.7V733.0M576.5,695.0V726.5M577.5,681.5V744.5M578.5,692.3V730.1M579.5,693.1V728.7M580.5,700.6V720.7M581.5,703.9V714.3M582.5,705.2V716.3M583.5,702.0V716.4M584.5,692.5V728.7M585.5,666.5V762.7M586.5,646.5V786.5M587.5,690.5V731.1M588.5,700.5V720.5M589.5,702.7V717.6M590.5,705.7V713.7M591.5,700.0V719.5M592.5,691.5V730.5M593.5,698.3V721.7M594.5,702.8V715.3M595.5,697.1V724.8M596.5,702.0V717.2M597.5,705.6V716.0M598.5,706.8V712.2M599.5,700.0V717.9M600.5,703.2V715.7M601.5,698.0V720.5M602.5,687.5V732.5M603.5,695.9V722.9M604.5,704.5V712.9M605.5,704.0V712.6M606.5,706.8V710.2 M945.5,707.6V709.4M946.5,706.5V711.0M947.5,705.8V712.0M948.5,705.5V712.3M949.5,705.2V712.6M950.5,705.2V712.7M951.5,705.4V712.5M952.5,705.5V712.3M953.5,705.6V711.8M954.5,703.0V718.4M955.5,700.5V723.5M956.5,703.7V717.5M957.5,706.0V712.1M958.5,703.3V715.5M959.5,706.4V711.0M960.5,706.8V710.2M961.5,707.8V709.2 M972.5,707.6V709.4M973.5,705.5V713.7M974.5,705.2V714.8M975.5,688.5V744.5M976.5,671.6V763.0M977.5,656.5V792.5M978.5,667.0V779.9M979.5,692.5V738.5M980.5,694.9V732.6M981.5,702.3V719.3M982.5,705.7V712.8M983.5,705.1V711.9M984.5,705.7V711.3M985.5,705.7V713.2M986.5,700.5V721.5M987.5,692.5V734.5M988.5,698.9V724.1M989.5,706.3V712.3M990.5,701.5V724.5M991.5,694.5V739.5M992.5,689.5V736.5M993.5,697.1V725.3M994.5,699.0V723.7M995.5,704.2V714.1M996.5,707.1V711.1M997.5,705.3V710.8M998.5,705.7V710.4M999.5,706.5V709.9M1000.5,707.8V709.2" fill="none" stroke="#686c6f" stroke-width="1.25"/>
<path d="M512.5,740.3L512.5,739.3L514.0,736.3L516.0,734.3L518.0,734.3L519.5,735.3L520.8,739.3L520.8,741.3L519.5,748.3L518.0,752.3L516.0,750.3L514.0,746.3L512.5,741.3Z M536.8,740.3L536.8,739.3L538.0,735.3L540.0,731.3L542.0,727.3L544.0,725.3L545.5,728.3L546.6,739.3L546.6,741.3L545.5,758.3L544.0,762.3L542.0,760.3L540.0,754.3L538.0,748.3L536.8,741.3Z" fill="#3f5f9c" stroke="#3f5f9c" stroke-width="0.6"/>
<path d="M611.0,740.3L611.0,739.5L613.0,738.3L615.0,739.5L615.0,741.1L613.0,742.3L611.0,741.1Z M866.0,740.3L866.0,739.7L885.0,739.7L885.0,740.9L866.0,740.9Z M944.0,740.3L944.0,739.8L948.0,739.8L948.0,740.8L944.0,740.8Z M1003.5,740.3L1003.5,739.5L1005.0,736.8L1007.0,735.8L1009.0,735.8L1010.5,736.3L1011.3,739.5L1011.3,741.1L1010.5,743.3L1009.0,745.3L1007.0,747.8L1005.0,743.3L1003.5,741.1Z" fill="#5b7bad" stroke="#5b7bad" stroke-width="0.6"/>
<path d="M93.5,739.4V741.1M94.5,738.9V741.7M95.5,738.5V742.1M96.5,738.3V742.3M97.5,738.9V742.5M98.5,733.2V750.7M99.5,731.9V752.9M100.5,734.3V753.4M101.5,718.3V772.5M102.5,729.2V761.0M103.5,733.5V751.2M104.5,732.2V754.5M105.5,710.2V789.1M106.5,721.0V772.1M107.5,721.6V755.1M108.5,693.3V795.3M109.5,712.9V769.6M110.5,687.4V805.4M111.5,679.5V814.7M112.5,664.3V833.3M113.5,675.7V819.3M114.5,694.7V796.1M115.5,731.9V759.2M116.5,726.5V756.1M117.5,714.6V774.1M118.5,723.3V762.3M119.5,706.3V784.3M120.5,714.3V771.8M121.5,725.5V756.9M122.5,715.3V764.8M123.5,690.3V789.3M124.5,710.3V769.7M125.5,722.5V759.1M126.5,733.2V749.1M127.5,735.2V747.5M128.5,729.3V753.3M129.5,718.3V766.3M130.5,727.1V755.9M131.5,735.5V747.7M132.5,721.8V767.8M133.5,705.7V787.0M134.5,672.3V824.3M135.5,714.3V772.7M136.5,730.6V751.8M137.5,737.8V742.8M138.5,739.4V741.1 M143.5,739.4V741.1M144.5,734.4V752.6M145.5,716.2V770.2M146.5,725.8V758.5M147.5,726.6V750.3M148.5,719.4V777.7M149.5,709.9V794.7M150.5,702.3V808.3M151.5,708.0V794.8M152.5,700.3V790.3M153.5,716.3V770.3M154.5,709.3V779.0M155.5,719.3V766.3M156.5,698.3V792.3M157.5,702.9V784.3M158.5,698.3V795.3M159.5,704.6V787.0M160.5,715.1V773.3M161.5,718.5V775.3M162.5,729.4V758.9M163.5,734.3V753.3M164.5,718.5V761.9M165.5,729.4V752.7M166.5,734.0V750.5M167.5,718.7V766.4M168.5,710.3V778.3M169.5,722.3V763.1M170.5,710.3V780.3M171.5,722.3V764.3M172.5,729.2V747.4M173.5,724.8V761.3M174.5,709.3V782.3M175.5,721.7V765.5M176.5,734.8V753.0M177.5,723.0V761.1M178.5,734.6V748.4M179.5,736.0V745.0M180.5,739.4V741.1 M276.5,732.0V749.7M277.5,730.4V754.7M278.5,726.2V754.6M279.5,715.2V787.1M280.5,707.3V791.4M281.5,692.3V814.7M282.5,680.3V833.3M283.5,670.3V828.3M284.5,692.3V810.3M285.5,698.3V793.1M286.5,705.6V781.8M287.5,723.5V765.3M288.5,726.6V759.8M289.5,731.9V753.8M290.5,713.7V783.9M291.5,726.0V759.5M292.5,710.3V771.4M293.5,705.3V772.3M294.5,714.2V764.0M295.5,727.6V753.7M296.5,733.8V747.9M297.5,719.6V772.8M298.5,722.3V763.2M299.5,704.3V785.3M300.5,728.3V756.3M301.5,735.6V746.9M302.5,737.3V744.3M303.5,735.0V747.1M304.5,738.3V742.9 M620.5,739.4V741.2M621.5,739.0V741.7M622.5,738.6V742.0M623.5,736.9V743.7M624.5,735.3V745.9M625.5,736.8V744.8M626.5,736.7V744.7M627.5,731.6V750.4M628.5,735.2V747.0M629.5,734.7V745.1M630.5,725.6V757.3M631.5,716.3V770.3M632.5,718.3V774.3M633.5,727.1V760.7M634.5,733.7V749.7M635.5,725.8V752.8M636.5,711.3V765.3M637.5,722.9V755.3M638.5,736.2V745.7M639.5,722.5V761.8M640.5,730.1V751.7M641.5,731.9V749.0M642.5,731.7V746.6M643.5,723.9V759.3M644.5,730.3V749.9M645.5,721.4V757.0M646.5,716.3V766.3M647.5,725.9V755.9M648.5,718.3V768.3M649.5,727.1V757.1M650.5,733.9V745.4M651.5,734.4V747.3M652.5,715.7V766.0M653.5,708.3V780.3M654.5,721.1V764.3M655.5,723.7V764.9M656.5,731.4V753.2M657.5,735.9V750.5M658.5,726.0V759.5M659.5,734.1V748.3M660.5,733.7V745.8M661.5,737.2V742.3M662.5,736.3V747.3M663.5,732.3V754.3M664.5,739.3V741.3 M668.5,739.4V741.1M669.5,735.1V748.6M670.5,735.8V751.9M671.5,733.1V748.4M672.5,722.1V767.0M673.5,729.0V757.1M674.5,728.7V754.0M675.5,728.0V761.6M676.5,696.4V793.3M677.5,707.3V781.5M678.5,692.3V800.3M679.5,680.3V815.3M680.5,689.3V804.0M681.5,704.3V785.3M682.5,733.3V756.4M683.5,733.2V750.7M684.5,709.2V771.5M685.5,720.3V761.3M686.5,700.3V782.3M687.5,714.9V765.5M688.5,730.3V750.4M689.5,736.6V746.2M690.5,725.0V761.8M691.5,733.0V752.6M692.5,735.5V748.6M693.5,722.6V764.4M694.5,722.3V758.8M695.5,704.3V777.3M696.5,718.7V762.5M697.5,723.5V759.6M698.5,737.1V744.2M699.5,738.4V742.2M700.5,737.3V744.1M701.5,723.3V763.1M702.5,725.3V757.3M703.5,710.3V774.3M704.5,714.6V764.5M705.5,728.3V751.5M706.5,732.5V745.0M707.5,736.9V745.3M708.5,731.0V751.1M709.5,734.8V746.7M710.5,737.5V744.9M711.5,731.8V750.3M712.5,723.3V760.3M713.5,730.1V752.3M714.5,736.3V743.2M715.5,736.5V744.3M716.5,731.3V746.6M717.5,731.8V748.3M718.5,723.3V756.3M719.5,730.1V749.9M720.5,728.8V749.6M721.5,735.1V744.9M722.5,732.8V746.6M723.5,736.8V743.1M724.5,739.1V741.3M725.5,738.6V742.0M726.5,736.8V746.0M727.5,736.8V745.5M728.5,737.0V745.0M729.5,730.6V757.0M730.5,731.2V755.0M731.5,733.6V748.6M732.5,717.5V770.3M733.5,711.3V777.3M734.5,722.9V762.5M735.5,732.6V747.6M736.5,721.6V762.2M737.5,730.5V752.6M738.5,734.0V749.2M739.5,733.6V749.5M740.5,721.8V756.5M741.5,715.3V767.3M742.5,725.3V756.5M743.5,734.5V746.0M744.5,726.1V752.3M745.5,731.9V748.5M746.5,714.6V766.8M747.5,708.3V772.3M748.5,721.1V759.5M749.5,734.1V744.8M750.5,723.9V758.1M751.5,721.3V760.3M752.5,728.9V752.3M753.5,727.9V754.5M754.5,726.8V757.3M755.5,713.3V774.3M756.5,713.3V777.3 M792.5,739.4V741.1M793.5,738.5V742.7M794.5,732.8V749.0M795.5,724.8V755.3M796.5,709.3V770.3M797.5,721.7V758.3M798.5,734.1V751.2M799.5,717.3V774.2M800.5,726.3V758.2M801.5,732.7V749.8M802.5,708.4V770.3M803.5,693.3V781.3M804.5,709.8V777.6M805.5,725.7V758.1M806.5,725.3V760.8M807.5,710.3V781.3M808.5,711.7V774.8M809.5,725.3V759.8M810.5,717.8V761.3M811.5,695.3V782.3M812.5,696.3V784.3M813.5,720.3V766.7 M836.5,736.3V746.4M837.5,715.1V772.2M838.5,719.3V765.8M839.5,698.3V791.3M840.5,707.3V773.1M841.5,700.1V783.2M842.5,681.9V802.7M843.5,667.3V818.3M844.5,695.3V797.8M845.5,696.5V792.3M846.5,689.3V805.3M847.5,710.3V785.3M848.5,709.7V788.3M849.5,704.3V800.3M850.5,697.3V790.3M851.5,714.5V776.3M852.5,728.6V752.6M853.5,708.5V783.8M854.5,697.3V791.3M855.5,714.5V770.9M856.5,710.7V777.9M857.5,721.8V756.6M858.5,703.3V772.3M859.5,718.1V759.5M860.5,712.6V762.7M861.5,710.3V772.3M862.5,732.9V748.2 M916.5,739.3V741.3M917.5,738.6V742.3M918.5,738.6V742.0M919.5,738.7V741.9M920.5,738.7V741.9M921.5,738.8V741.8M922.5,738.7V741.9M923.5,738.7V741.9M924.5,738.7V741.9M925.5,738.6V742.0M926.5,738.3V742.6M927.5,737.8V743.7M928.5,735.9V745.5M929.5,736.5V744.3M930.5,736.4V743.5M931.5,729.7V755.7M932.5,733.3V750.1M933.5,730.8V753.8M934.5,721.3V767.3M935.5,737.8V743.5 M1041.5,739.4V741.1M1042.5,726.8V757.8M1043.5,713.3V775.3M1044.5,732.8V749.4M1045.5,735.7V745.5M1046.5,733.0V745.6M1047.5,716.3V762.8M1048.5,661.3V796.3M1049.5,692.3V785.9M1050.5,705.9V764.3M1051.5,736.8V741.7" fill="none" stroke="#5b7bad" stroke-width="1.25"/>
<line x1="41" x2="1082" y1="843.5" y2="843.5" stroke="#000" stroke-width="1.3"/>
<line x1="53.1" x2="53.1" y1="840" y2="843.5" stroke="#000" stroke-width="1.1"/>
<line x1="98.3" x2="98.3" y1="840" y2="843.5" stroke="#000" stroke-width="1.1"/>
<line x1="143.5" x2="143.5" y1="838" y2="843.5" stroke="#000" stroke-width="1.1"/>
<line x1="188.7" x2="188.7" y1="840" y2="843.5" stroke="#000" stroke-width="1.1"/>
<line x1="233.9" x2="233.9" y1="840" y2="843.5" stroke="#000" stroke-width="1.1"/>
<line x1="279.1" x2="279.1" y1="838" y2="843.5" stroke="#000" stroke-width="1.1"/>
<line x1="324.3" x2="324.3" y1="840" y2="843.5" stroke="#000" stroke-width="1.1"/>
<line x1="369.5" x2="369.5" y1="840" y2="843.5" stroke="#000" stroke-width="1.1"/>
<line x1="414.7" x2="414.7" y1="838" y2="843.5" stroke="#000" stroke-width="1.1"/>
<line x1="459.9" x2="459.9" y1="840" y2="843.5" stroke="#000" stroke-width="1.1"/>
<line x1="505.1" x2="505.1" y1="840" y2="843.5" stroke="#000" stroke-width="1.1"/>
<line x1="550.3" x2="550.3" y1="838" y2="843.5" stroke="#000" stroke-width="1.1"/>
<line x1="595.5" x2="595.5" y1="840" y2="843.5" stroke="#000" stroke-width="1.1"/>
<line x1="640.7" x2="640.7" y1="840" y2="843.5" stroke="#000" stroke-width="1.1"/>
<line x1="685.9" x2="685.9" y1="838" y2="843.5" stroke="#000" stroke-width="1.1"/>
<line x1="731.1" x2="731.1" y1="840" y2="843.5" stroke="#000" stroke-width="1.1"/>
<line x1="776.3" x2="776.3" y1="840" y2="843.5" stroke="#000" stroke-width="1.1"/>
<line x1="821.5" x2="821.5" y1="838" y2="843.5" stroke="#000" stroke-width="1.1"/>
<line x1="866.7" x2="866.7" y1="840" y2="843.5" stroke="#000" stroke-width="1.1"/>
<line x1="911.9" x2="911.9" y1="840" y2="843.5" stroke="#000" stroke-width="1.1"/>
<line x1="957.1" x2="957.1" y1="838" y2="843.5" stroke="#000" stroke-width="1.1"/>
<line x1="1002.3" x2="1002.3" y1="840" y2="843.5" stroke="#000" stroke-width="1.1"/>
<line x1="1047.5" x2="1047.5" y1="840" y2="843.5" stroke="#000" stroke-width="1.1"/>
<text x="143.0" y="857.5" text-anchor="middle" fill="#111">30</text>
<text x="278.6" y="857.5" text-anchor="middle" fill="#111">36</text>
<text x="414.2" y="857.5" text-anchor="middle" fill="#111">42</text>
<text x="549.8" y="857.5" text-anchor="middle" fill="#111">48</text>
<text x="685.4" y="857.5" text-anchor="middle" fill="#111">54</text>
<text x="821.0" y="857.5" text-anchor="middle" fill="#111">60</text>
<text x="956.6" y="857.5" text-anchor="middle" fill="#111">66</text>
</svg>
<div class="a" style="left:26px;top:870px;width:1070px;height:85px;background:#fff;border:1px solid #828790"></div>
<div class="t hd" style="left:31.5px;top:877.3px;letter-spacing:-.05px">Source Address</div>
<div class="t s" style="left:30.5px;top:896.6px;">192.168.102.250</div>
<div class="t s2" style="left:30.5px;top:913.8px;">192.168.102.250</div>
<div class="t hd" style="left:124.5px;top:877.3px;">Source Port</div>
<div class="t s" style="left:123.5px;top:896.6px;">17380</div>
<div class="t s2" style="left:123.5px;top:913.8px;">12562</div>
<div class="t hd" style="left:198.5px;top:877.3px;">Destination Address</div>
<div class="t s" style="left:197.5px;top:896.6px;">192.168.102.105</div>
<div class="t s2" style="left:197.5px;top:913.8px;">192.168.101.240</div>
<div class="t hd" style="left:317.5px;top:877.3px;">Destination Port</div>
<div class="t s" style="left:316.5px;top:896.6px;">10082</div>
<div class="t s2" style="left:316.5px;top:913.8px;">10002</div>
<div class="t hd" style="left:416.5px;top:877.3px;">SSRC</div>
<div class="t s" style="left:415.5px;top:896.6px;">0x136d2354</div>
<div class="t s2" style="left:415.5px;top:913.8px;">0x29856ecd</div>
<div class="t hd" style="left:482.5px;top:877.3px;">Setup Frame</div>
<div class="t s" style="left:481.5px;top:896.6px;">1867</div>
<div class="t s2" style="left:481.5px;top:913.8px;">1869</div>
<div class="t hd" style="left:562px;top:877.3px;">Packets</div>
<div class="t s" style="left:561px;top:896.6px;">2247</div>
<div class="t s2" style="left:561px;top:913.8px;">752</div>
<div class="t hd" style="left:613px;top:877.3px;">Time Span (s)</div>
<div class="t s" style="left:612px;top:896.6px;">25.2 - 70.2 (44.9)</div>
<div class="t s2" style="left:612px;top:913.8px;">25 - 70.1 (45.1)</div>
<div class="t hd" style="left:704px;top:877.3px;">Sample Rate (Hz)</div>
<div class="t s" style="left:703px;top:896.6px;">8000</div>
<div class="t s2" style="left:703px;top:913.8px;">8000</div>
<div class="t hd" style="left:808px;top:877.3px;">Payloads</div>
<div class="t s" style="left:807px;top:896.6px;">g711A</div>
<div class="t s2" style="left:807px;top:913.8px;">g711A</div>
<div class="a" style="left:120px;top:871px;width:1px;height:22px;background:#e5e5e5"></div>
<div class="a" style="left:194px;top:871px;width:1px;height:22px;background:#e5e5e5"></div>
<div class="a" style="left:313px;top:871px;width:1px;height:22px;background:#e5e5e5"></div>
<div class="a" style="left:412px;top:871px;width:1px;height:22px;background:#e5e5e5"></div>
<div class="a" style="left:478px;top:871px;width:1px;height:22px;background:#e5e5e5"></div>
<div class="a" style="left:557px;top:871px;width:1px;height:22px;background:#e5e5e5"></div>
<div class="a" style="left:608px;top:871px;width:1px;height:22px;background:#e5e5e5"></div>
<div class="a" style="left:699px;top:871px;width:1px;height:22px;background:#e5e5e5"></div>
<div class="a" style="left:803px;top:871px;width:1px;height:22px;background:#e5e5e5"></div>
<div class="btn" style="left:27px;top:981px;width:20px;height:20px"><svg width="18" height="18" viewBox="0 0 18 18" style="position:absolute;left:0;top:0"><path d="M4.5,3.5 L14,9 L4.5,14.5 Z" fill="#111"/></svg></div>
<div class="btn" style="left:76px;top:981px;width:21px;height:20px;background:#ccc;border-color:#bfbfbf"><div style="position:absolute;left:3.5px;top:3.5px;width:12px;height:12px;background:#808080"></div></div>
<div class="t " style="left:124px;top:986px;">Output Device:</div>
<div class="btn" style="left:203px;top:982px;width:267px;height:19px;text-align:left;padding-left:3px;line-height:18.5px">Динамики / головные телефоны (Realtek Audio)<svg width="9" height="5" viewBox="0 0 9 5" style="position:absolute;left:252px;top:6.5px"><path d="M0.5,0 H8.5 L4.5,4.5 Z" fill="#111"/></svg></div>
<div class="t " style="left:26px;top:1015.3px;">Jitter Buffer:</div>
<div class="a" style="left:94px;top:1010px;width:43px;height:20px;background:#fff;border:1px solid #7a7a7a;line-height:19px;padding-left:2px">50<div style="position:absolute;left:27px;top:1px;width:13px;height:16px;background:#f0f0f0;border:1px solid #c8c8c8"><svg width="11" height="14" viewBox="0 0 11 14" style="position:absolute;left:0;top:0"><path d="M2.5,5.5 L5.5,2 L8.5,5.5 Z M2.5,8.5 L5.5,12 L8.5,8.5 Z" fill="#111"/></svg></div></div>
<div class="t " style="left:162.4px;top:1015.3px;">Playback Timing:</div>
<div class="btn" style="left:248px;top:1011px;width:122px;height:19px;text-align:left;padding-left:3.5px;line-height:18.5px">Jitter Buffer<svg width="9" height="5" viewBox="0 0 9 5" style="position:absolute;left:107px;top:6.5px"><path d="M0.5,0 H8.5 L4.5,4.5 Z" fill="#111"/></svg></div>
<div class="a" style="left:396px;top:1013px;width:13px;height:13px;background:#fff;border:1px solid #333"></div>
<div class="t " style="left:413.5px;top:1014.3px;letter-spacing:-.2px">Time of Day</div>
</body></html>
